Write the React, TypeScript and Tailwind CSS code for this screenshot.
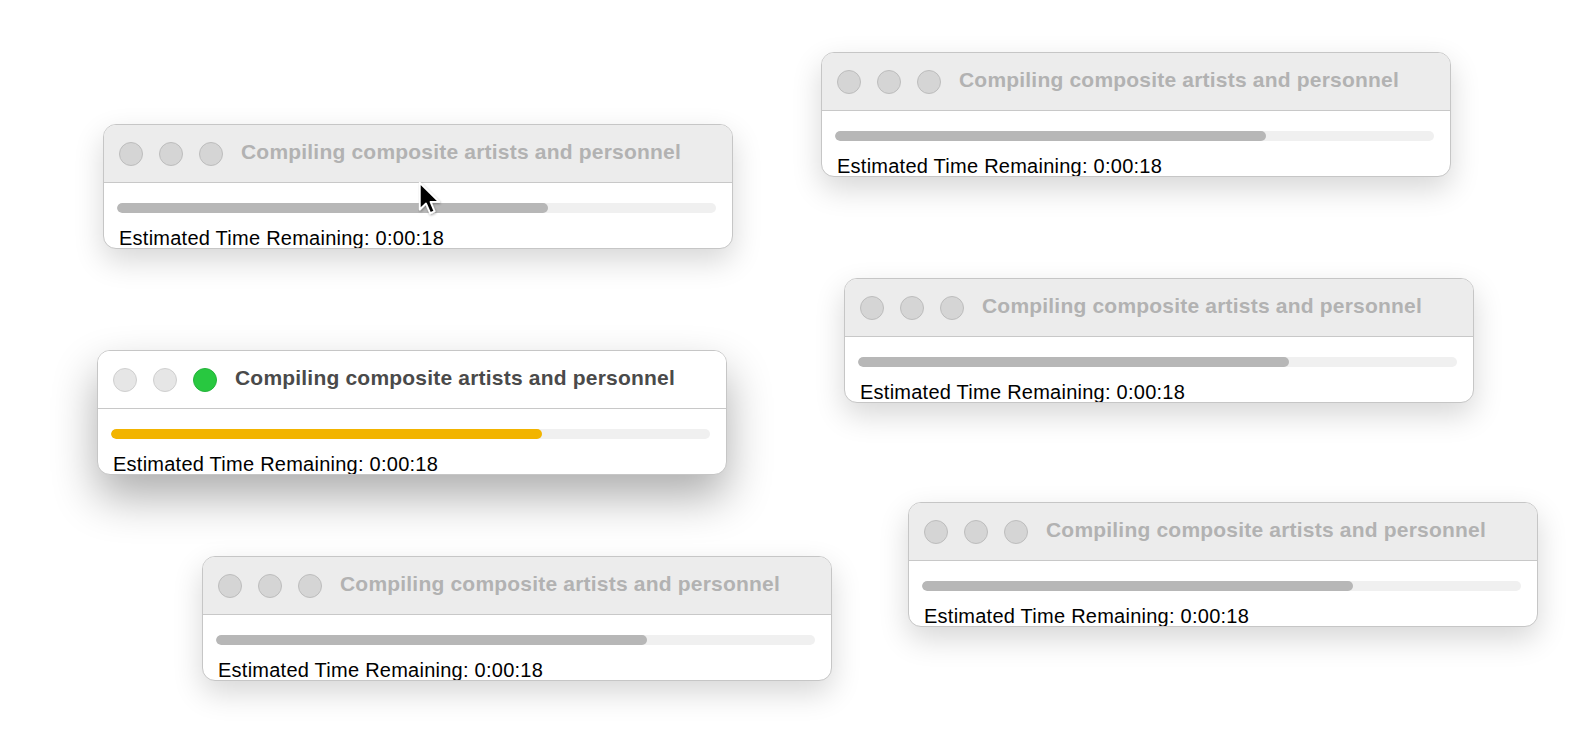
import React from "react";

type Win = { x: number; y: number; active?: boolean };

const wins: Win[] = [
  { x: 821, y: 52 },
  { x: 103, y: 124 },
  { x: 844, y: 278 },
  { x: 908, y: 502 },
  { x: 202, y: 556 },
  { x: 97, y: 350, active: true },
];

function Light({ kind }: { kind: "inactive" | "dim" | "green" }) {
  if (kind === "green")
    return <div className="w-[24px] h-[24px] rounded-full bg-[#28c840] border border-[#24b33a]" />;
  if (kind === "dim")
    return <div className="w-[24px] h-[24px] rounded-full bg-[#e6e6e6] border border-[#cfcfcf]" />;
  return <div className="w-[24px] h-[24px] rounded-full bg-[#d5d5d5] border border-[#bdbdbd]" />;
}

function Window({ w }: { w: Win }) {
  const active = !!w.active;
  return (
    <div
      className={
        "absolute w-[630px] h-[125px] rounded-[13px] border border-[#c6c6c6] bg-white overflow-hidden flex flex-col " +
        (active
          ? "shadow-[0_22px_45px_rgba(0,0,0,0.32)]"
          : "shadow-[0_12px_30px_rgba(0,0,0,0.16)]")
      }
      style={{ left: w.x, top: w.y }}
    >
      <div
        className={
          "h-[58px] shrink-0 flex items-center pl-[15px] border-b border-[#c8c8c8] " +
          (active ? "bg-white" : "bg-[#ececec]")
        }
      >
        <div className="flex gap-[16px]">
          <Light kind={active ? "dim" : "inactive"} />
          <Light kind={active ? "dim" : "inactive"} />
          <Light kind={active ? "green" : "inactive"} />
        </div>
        <div
          className={
            "ml-[18px] mb-[4px] text-[21px] tracking-[0.2px] font-bold leading-none " +
            (active ? "text-[#4a4a4a]" : "text-[#b2b2b2]")
          }
        >
          Compiling composite artists and personnel
        </div>
      </div>
      <div className="pt-[20px] pl-[13px] pr-[16px]">
        <div className="h-[10px] rounded-full bg-[#f0f0f0] overflow-hidden">
          <div
            className={"h-full rounded-full " + (active ? "bg-[#f2b400]" : "bg-[#b7b7b7]")}
            style={{ width: "72%" }}
          />
        </div>
        <div className="mt-[14px] pl-[2px] text-[20px] tracking-[0.25px] leading-[22px] text-black whitespace-nowrap">
          Estimated Time Remaining: 0:00:18
        </div>
      </div>
    </div>
  );
}

export default function App() {
  return (
    <div
      className="relative w-[1593px] h-[752px] bg-white overflow-hidden"
      style={{ fontFamily: '"Liberation Sans", Arial, sans-serif' }}
    >
      {wins.map((w, i) => (
        <Window key={i} w={w} />
      ))}
      <svg
        className="absolute"
        style={{ left: 418, top: 181 }}
        width="26"
        height="38"
        viewBox="0 0 22 32"
      >
        <defs>
          <filter id="cs" x="-50%" y="-50%" width="200%" height="200%">
            <feDropShadow dx="0.5" dy="1" stdDeviation="1" floodOpacity="0.35" />
          </filter>
        </defs>
        <path
          d="M1.5 1.5 L1.5 24 L6.8 19 L10.3 27.2 L14 25.6 L10.6 17.6 L17.8 17.6 Z"
          fill="#000"
          stroke="#fff"
          strokeWidth="1.6"
          strokeLinejoin="round"
          filter="url(#cs)"
        />
      </svg>
    </div>
  );
}
